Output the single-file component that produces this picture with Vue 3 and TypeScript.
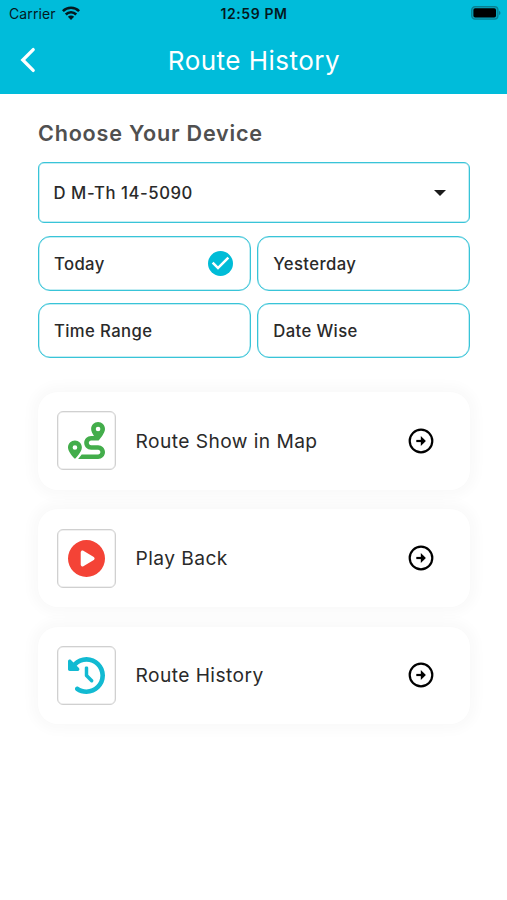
<script setup lang="ts">
import { ref } from 'vue'

type Period = 'Today' | 'Yesterday' | 'Time Range' | 'Date Wise'
interface Action {
  label: string
  color: string
  path: string
}

const periods: Period[] = ['Today', 'Yesterday', 'Time Range', 'Date Wise']
const selected = ref<Period>('Today')

const actions: Action[] = [
  {
    label: 'Route Show in Map',
    color: '#43ad4b',
    path: 'M512 96c0 50.2-59.1 125.1-84.6 155c-3.8 4.4-9.4 6.1-14.5 5H320c-17.7 0-32 14.3-32 32s14.3 32 32 32h96c53 0 96 43 96 96s-43 96-96 96H139.6c8.7-9.9 19.3-22.6 30-36.8c6.3-8.4 12.8-17.6 19-27.2H416c17.7 0 32-14.3 32-32s-14.3-32-32-32H320c-53 0-96-43-96-96s43-96 96-96h39.8c-21-31.5-39.8-67.7-39.8-96c0-53 43-96 96-96s96 43 96 96zM117.1 489.1c-3.8 4.3-7.2 8.1-10.1 11.3l-1.8 2-.2-.2c-6 4.6-14.6 4-20-1.8C59.8 473 0 402.5 0 352c0-53 43-96 96-96s96 43 96 96c0 30-21.1 67-43.5 97.9c-10.7 14.7-21.7 28-30.8 38.5l-.6 .7zM128 352a32 32 0 1 0 -64 0 32 32 0 1 0 64 0zM416 128a32 32 0 1 0 0-64 32 32 0 1 0 0 64z',
  },
  {
    label: 'Play Back',
    color: '#f44336',
    path: 'M0 256a256 256 0 1 1 512 0A256 256 0 1 1 0 256zM188.3 147.1c-7.6 4.2-12.3 12.3-12.3 20.9V344c0 8.7 4.7 16.7 12.3 20.9s16.8 4.1 24.3-.5l144-88c7.1-4.4 11.5-12.1 11.5-20.5s-4.4-16.1-11.5-20.5l-144-88c-7.4-4.5-16.7-4.7-24.3-.5z',
  },
  {
    label: 'Route History',
    color: '#12bad2',
    path: 'M75 75L41 41C25.9 25.9 0 36.6 0 57.9V168c0 13.3 10.7 24 24 24H134.1c21.4 0 32.1-25.9 17-41l-30.8-30.8C155 85.5 203 64 256 64c106 0 192 86 192 192s-86 192-192 192c-40.8 0-78.6-12.7-109.7-34.4c-14.5-10.1-34.4-6.6-44.6 7.9s-6.6 34.4 7.9 44.6C151.2 495 201.7 512 256 512c141.4 0 256-114.6 256-256S397.4 0 256 0C185.3 0 120.3 28.7 75 75zm181 53c-13.3 0-24 10.7-24 24V256c0 6.4 2.5 12.5 7 17l72 72c9.4 9.4 24.6 9.4 33.9 0s9.4-24.6 0-33.9l-65-65V152c0-13.3-10.7-24-24-24z',
  },
]
</script>

<template>
  <div class="screen">
    <header class="header">
      <div class="status">
        <div class="carrier">
          <span>Carrier</span>
          <svg class="wifi" viewBox="0 0 18 14" fill="none" stroke="#04191e" stroke-width="2.6">
            <path d="M.9 5.1a11.5 11.5 0 0 1 16.2 0M3.8 8.5a7.3 7.3 0 0 1 10.4 0" />
            <path d="M5.9 10.7a4.3 4.3 0 0 1 6.2 0L9 14z" fill="#04191e" stroke="none" />
          </svg>
        </div>
        <span class="clock">12:59 PM</span>
        <svg class="battery" viewBox="0 0 30 14">
          <rect x=".7" y=".7" width="26.2" height="12.4" rx="3.4" fill="#08a5be" stroke="#087f91" stroke-width="1.3" />
          <rect x="2.4" y="2.3" width="22.6" height="9.2" rx="1.8" fill="#000" />
          <path d="M28 4.8c2 .8 2 3.5 0 4.3z" fill="#087f91" />
        </svg>
      </div>
      <div class="navbar">
        <button class="back" aria-label="Back">
          <svg viewBox="0 0 16 26" fill="none" stroke="#fff" stroke-width="3.3" stroke-linecap="round">
            <path d="M13.2 2.6 2.8 13l10.4 10.4" />
          </svg>
        </button>
        <h1>Route History</h1>
      </div>
    </header>

    <main class="content">
      <h2>Choose Your Device</h2>
      <div class="select">
        <span>D M-Th 14-5090</span>
        <svg class="caret" viewBox="0 0 12 6"><path d="M0 0h12L6 6z" fill="#1b1b1b" /></svg>
      </div>
      <div class="periods">
        <button v-for="p in periods" :key="p" class="period" @click="selected = p">
          <span>{{ p }}</span>
          <svg v-if="p === selected" class="check" viewBox="2 2 20 20">
            <circle cx="12" cy="12" r="10" fill="#00bcd7" />
            <path d="M10 17l-5-5 1.41-1.41L10 14.17l7.59-7.59L19 8z" fill="#fff" />
          </svg>
        </button>
      </div>
      <div class="actions">
        <button v-for="a in actions" :key="a.label" class="card">
          <span class="tile">
            <svg viewBox="0 0 512 512"><path :d="a.path" :fill="a.color" /></svg>
          </span>
          <span class="label">{{ a.label }}</span>
          <svg class="go" viewBox="0 0 26 26" fill="none" stroke="#000">
            <circle cx="13" cy="13" r="11.3" stroke-width="2.2" />
            <path d="M8.3 13h7" stroke-width="2.2" />
            <path d="M12.8 8.1 17.9 13l-5.1 4.9z" fill="#000" stroke="none" />
          </svg>
        </button>
      </div>
    </main>
  </div>
</template>

<style>
body {
  background: #fff;
}
</style>

<style scoped>
.screen {
  min-height: 900px;
  background: #fff;
  font-family: Inter, "Liberation Sans", sans-serif;
  color: #2a2a2a;
}
button {
  font: inherit;
  color: inherit;
  border: 0;
  background: none;
  padding: 0;
  text-align: left;
}
svg {
  display: block;
  flex: none;
}
.header {
  height: 94px;
  box-sizing: border-box;
  background: #00bcda;
}
.status {
  display: grid;
  grid-template-columns: 1fr auto 1fr;
  align-items: center;
  height: 27px;
  padding: 0 6px 0 9px;
  color: #04191e;
}
.carrier {
  display: flex;
  align-items: center;
  gap: 6px;
  font-size: 14px;
  letter-spacing: 0.1px;
}
.wifi {
  width: 18px;
  height: 14px;
  margin-top: -2px;
}
.clock {
  margin-left: -2px;
  font-size: 14px;
  font-weight: 600;
  letter-spacing: 0.6px;
}
.battery {
  width: 30px;
  height: 14px;
  justify-self: end;
  margin-top: -1px;
}
.navbar {
  display: grid;
  grid-template-columns: 54px 1fr 54px;
  align-items: center;
  height: 66px;
}
.back {
  padding-left: 20px;
}
.back svg {
  width: 16px;
  height: 26px;
}
h1 {
  margin: 0;
  padding-left: 1px;
  text-align: center;
  font-size: 26px;
  font-weight: 400;
  letter-spacing: 0.48px;
  color: #fff;
}
.content {
  padding: 0 37px 0 37.5px;
}
h2 {
  margin: 0;
  padding: 24px 0 0 0.5px;
  height: 44px;
  line-height: 31px;
  font-size: 21.6px;
  font-weight: 600;
  letter-spacing: 0.78px;
  color: #505050;
}
.select,
.period {
  border: 1px solid #38c4d8;
  box-shadow: inset 0 0 0 0.5px rgba(56, 196, 216, 0.6);
}
.select {
  display: flex;
  align-items: center;
  justify-content: space-between;
  box-sizing: border-box;
  height: 61px;
  padding: 0 23px 0 15px;
  border-radius: 6px;
  font-size: 16.7px;
  font-weight: 500;
  letter-spacing: 0.56px;
}
.caret {
  width: 12px;
  height: 6px;
}
.periods {
  display: grid;
  grid-template-columns: 1fr 1fr;
  gap: 12px 6px;
  margin-top: 13px;
}
.period {
  display: flex;
  align-items: center;
  justify-content: space-between;
  box-sizing: border-box;
  height: 55px;
  padding: 0 17px 0 15.5px;
  border-radius: 12px;
  font-size: 16.7px;
  font-weight: 500;
  letter-spacing: 0.38px;
}
.period span {
  line-height: 20px;
  padding-top: 1px;
}
.check {
  width: 25px;
  height: 25px;
}
.actions {
  display: flex;
  flex-direction: column;
  gap: 19.6px;
  margin-top: 34px;
}
.card {
  display: flex;
  align-items: center;
  height: 97.7px;
  padding: 0 36px 0 19.5px;
  border-radius: 20px;
  background: #fff;
  box-shadow: 0 0 12px 7px rgba(0, 0, 0, 0.024);
}
.tile {
  display: grid;
  place-items: center;
  box-sizing: border-box;
  width: 59px;
  height: 59px;
  border: 1px solid #d0d0d0;
  box-shadow: inset 0 0 0 0.5px rgba(208, 208, 208, 0.6);
  border-radius: 6px;
}
.tile svg {
  width: 37px;
  height: 37px;
}
.label {
  flex: 1;
  padding-left: 19.5px;
  line-height: 24px;
  font-size: 19.2px;
  letter-spacing: 0.43px;
}
.go {
  width: 26px;
  height: 26px;
}
</style>
